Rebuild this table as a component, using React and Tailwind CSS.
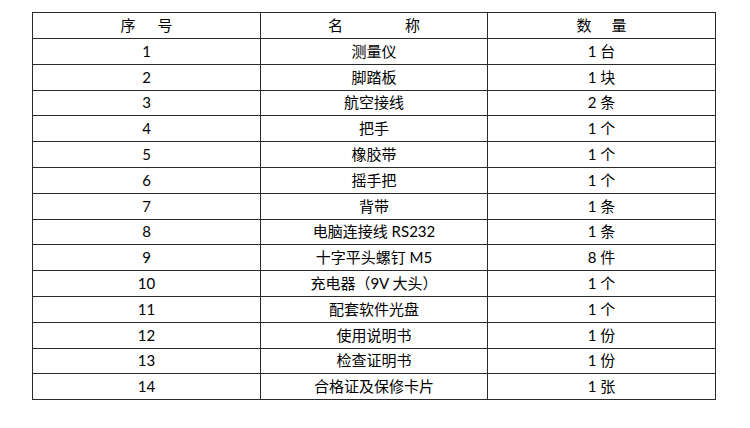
import React from "react";

const items = [
  ["1", "测量仪", "1 台"],
  ["2", "脚踏板", "1 块"],
  ["3", "航空接线", "2 条"],
  ["4", "把手", "1 个"],
  ["5", "橡胶带", "1 个"],
  ["6", "摇手把", "1 个"],
  ["7", "背带", "1 条"],
  ["8", "电脑连接线 RS232", "1 条"],
  ["9", "十字平头螺钉 M5", "8 件"],
  ["10", "充电器（9V 大头）", "1 个"],
  ["11", "配套软件光盘", "1 个"],
  ["12", "使用说明书", "1 份"],
  ["13", "检查证明书", "1 份"],
  ["14", "合格证及保修卡片", "1 张"],
];

export default function App() {
  return (
    <div
      className="w-[750px] h-[428px] bg-white pt-[12px] pl-[32px]"
      style={{ fontFamily: "Lato, 'Noto Sans CJK SC', sans-serif" }}
    >
      <table className="w-[684px] border-collapse border-[1.5px] border-[#2a2a2a] text-[15px] text-black table-fixed">
        <thead>
          <tr className="h-[26px]">
            <th className="w-[228px] border border-[#2a2a2a] font-normal leading-none">
              序<span className="inline-block w-[22px]"></span>号
            </th>
            <th className="w-[227px] border border-[#2a2a2a] font-normal leading-none">
              名<span className="inline-block w-[62px]"></span>称
            </th>
            <th className="border border-[#2a2a2a] font-normal leading-none">
              数<span className="inline-block w-[20px]"></span>量
            </th>
          </tr>
        </thead>
        <tbody>
          {items.map(([no, name, qty]) => (
            <tr key={no} className="h-[25.8px]">
              <td className="border border-[#2a2a2a] text-center leading-none">{no}</td>
              <td className="border border-[#2a2a2a] text-center leading-none">{name}</td>
              <td className="border border-[#2a2a2a] text-center leading-none">{qty}</td>
            </tr>
          ))}
        </tbody>
      </table>
    </div>
  );
}
